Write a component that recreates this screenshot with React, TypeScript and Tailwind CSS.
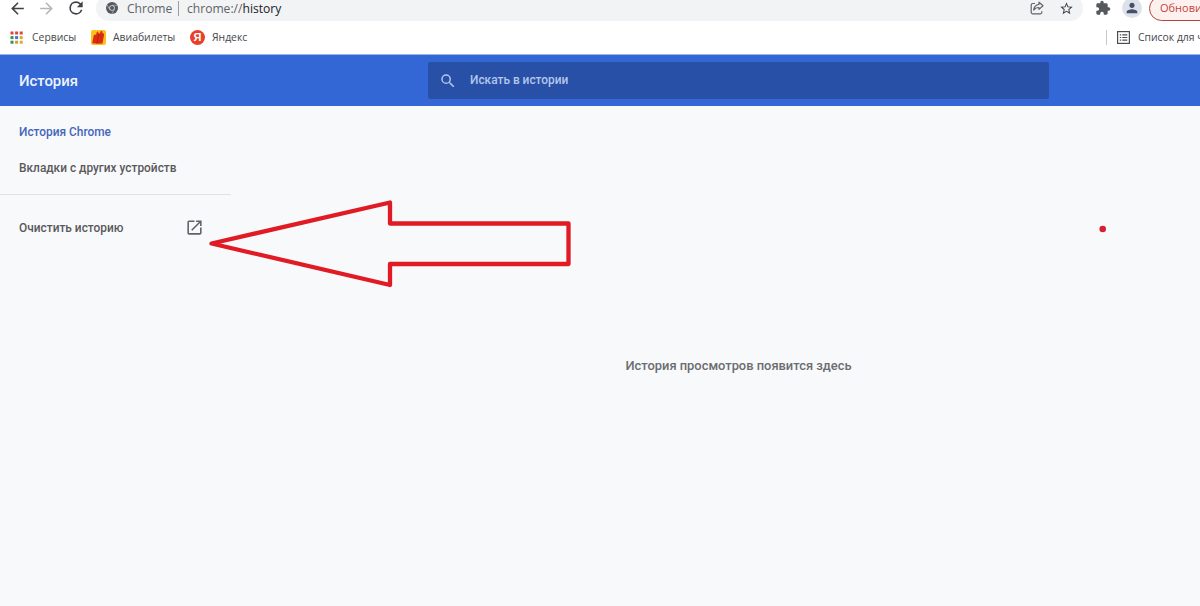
import type { ReactNode } from "react";

function Icon({
  d,
  size,
  className = "",
}: {
  d: string;
  size: number;
  className?: string;
}) {
  return (
    <svg
      width={size}
      height={size}
      viewBox="0 0 24 24"
      fill="currentColor"
      className={`shrink-0 ${className}`}
    >
      <path d={d} />
    </svg>
  );
}

const icons = {
  back: "M20 11H7.83l5.59-5.59L12 4l-8 8 8 8 1.41-1.41L7.83 13H20v-2z",
  forward: "M12 4l-1.41 1.41L16.17 11H4v2h12.17l-5.58 5.59L12 20l8-8z",
  reload:
    "M17.65 6.35A7.96 7.96 0 0 0 12 4a8 8 0 1 0 7.73 10h-2.08A6 6 0 1 1 12 6c1.66 0 3.14.69 4.22 1.78L13 11h7V4l-2.35 2.35z",
  star: "M22 9.24l-7.19-.62L12 2 9.19 8.63 2 9.24l5.46 4.73L5.82 21 12 17.27 18.18 21l-1.63-7.03L22 9.24zM12 15.4l-3.76 2.27 1-4.28-3.32-2.88 4.38-.38L12 6.1l1.71 4.04 4.38.38-3.32 2.88 1 4.28L12 15.4z",
  puzzle:
    "M20.5 11H19V7c0-1.1-.9-2-2-2h-4V3.5a2.5 2.5 0 0 0-5 0V5H4c-1.1 0-1.99.9-1.99 2v3.8H3.5a2.7 2.7 0 0 1 0 5.4H2V20c0 1.1.9 2 2 2h3.8v-1.5a2.7 2.7 0 0 1 5.4 0V22H17c1.1 0 2-.9 2-2v-4h1.5a2.5 2.5 0 0 0 0-5z",
  person:
    "M12 12c2.21 0 4-1.79 4-4s-1.79-4-4-4-4 1.79-4 4 1.79 4 4 4zm0 2c-2.67 0-8 1.34-8 4v2h16v-2c0-2.66-5.33-4-8-4z",
  search:
    "M15.5 14h-.79l-.28-.27A6.47 6.47 0 0 0 16 9.5 6.5 6.5 0 1 0 9.5 16c1.61 0 3.09-.59 4.23-1.57l.27.28v.79l5 4.99L20.49 19l-4.99-5zm-6 0a4.5 4.5 0 1 1 0-9 4.5 4.5 0 0 1 0 9z",
  open: "M19 19H5V5h7V3H5a2 2 0 0 0-2 2v14a2 2 0 0 0 2 2h14c1.1 0 2-.9 2-2v-7h-2v7zM14 3v2h3.59l-9.83 9.83 1.41 1.41L19 6.41V10h2V3h-7z",
};

function ChromeIcon() {
  return (
    <svg width="12" height="12" viewBox="0 0 24 24" className="shrink-0">
      <circle cx="12" cy="12" r="12" fill="#55595f" />
      <path
        d="M12 6.5h10.5M7.2 14.8L2 5.7M16.8 14.8L11.6 23.8"
        stroke="#c4c7cb"
        strokeWidth="1.3"
      />
      <circle cx="12" cy="12" r="5.6" fill="#d5d8dc" />
      <circle cx="12" cy="12" r="4" fill="#55595f" />
    </svg>
  );
}

function ShareIcon() {
  return (
    <svg
      width="14"
      height="14"
      viewBox="0 0 14 14"
      fill="none"
      stroke="#5f6368"
      strokeWidth="1.2"
      strokeLinejoin="round"
      className="shrink-0"
    >
      <path d="M5 2.5H2.8A1.6 1.6 0 0 0 1.2 4v7.2a1.6 1.6 0 0 0 1.6 1.6h7.4a1.6 1.6 0 0 0 1.6-1.6v-1" />
      <path d="M9 1.2l4 3.6-4 3.6V6.5c-2.6 0-4.2.8-5.3 2.6.3-3 2-5.4 5.3-5.8z" />
    </svg>
  );
}

const appColors = [
  "#d9483b",
  "#d9483b",
  "#d9483b",
  "#3c8f52",
  "#3f77d6",
  "#e0a92e",
  "#3c8f52",
  "#c9a02c",
  "#e0a92e",
];

function AppsIcon() {
  return (
    <svg width="13" height="13" viewBox="0 0 13 13" className="shrink-0">
      {appColors.map((color, i) => (
        <rect
          key={i}
          x={0.5 + (i % 3) * 4.6}
          y={0.5 + Math.floor(i / 3) * 4.6}
          width="3"
          height="3"
          fill={color}
        />
      ))}
    </svg>
  );
}

function TicketsIcon() {
  return (
    <svg width="15" height="15" viewBox="0 0 15 15" className="shrink-0">
      <rect width="15" height="15" rx="2" fill="#fbc21c" />
      <path d="M2.8 5l2.4-.6.5-2.2 1.2-.6.8 2 1.3-.3.8-2.2 1.4-.2.2 2.2 1.8.8-1.7 9.6-4 .3-6.3-.6z" fill="#dd2a12" />
      <path d="M7.8 4L6 13.5" stroke="#a51b0c" strokeWidth=".6" />
    </svg>
  );
}

function ReadingListIcon() {
  return (
    <svg
      width="13"
      height="13"
      viewBox="0 0 13 13"
      fill="none"
      stroke="#4a4d51"
      strokeWidth="1.2"
      className="shrink-0"
    >
      <rect x=".6" y=".6" width="11.8" height="11.8" />
      <path d="M2.8 3.8h1.4M5.3 3.8h5M2.8 6.5h1.4M5.3 6.5h5M2.8 9.2h1.4M5.3 9.2h5" />
    </svg>
  );
}

function Bookmark({
  icon,
  label,
  className,
}: {
  icon: ReactNode;
  label: string;
  className: string;
}) {
  return (
    <div className={`flex items-center whitespace-nowrap ${className}`}>
      {icon}
      <span>{label}</span>
    </div>
  );
}

function Toolbar() {
  return (
    <div className="h-[21px] overflow-hidden">
      <div className="-mt-[5px] flex h-[26px] items-center text-[#5f6368]">
        <Icon d={icons.back} size={19} className="ml-2 text-[#3f4246]" />
        <Icon d={icons.forward} size={19} className="ml-[10px] text-[#b4b6b9]" />
        <Icon d={icons.reload} size={20} className="ml-[10px] text-[#3f4246]" />
        <div className="ml-[10px] flex h-[26px] w-[987px] shrink-0 items-center rounded-full bg-[#f1f3f4] pl-[10px] pr-[9px] text-[12.1px]">
          <ChromeIcon />
          <span className="ml-[9px] w-[45px] pt-[2px]">Chrome</span>
          <div className="ml-[6px] h-[15px] w-px bg-[#9a9da1]" />
          <span className="ml-2 pt-[2px]">
            chrome://<span className="text-[#202124]">history</span>
          </span>
          <div className="ml-auto flex items-center gap-[15px]">
            <ShareIcon />
            <Icon d={icons.star} size={15} className="text-[#3f4246]" />
          </div>
        </div>
        <Icon d={icons.puzzle} size={16} className="ml-[12px] text-[#55585c]" />
        <div className="ml-[11px] flex size-[20px] shrink-0 items-center justify-center rounded-full bg-[#dde2ea]">
          <Icon d={icons.person} size={16} className="text-[#46506a]" />
        </div>
        <div className="ml-[7px] flex h-[25px] w-[90px] shrink-0 items-center rounded-full border border-[#b5453c] bg-[#fdf1f0] pl-[10px] text-[11px] text-[#c5443b]">
          Обновить
        </div>
      </div>
    </div>
  );
}

function BookmarksBar() {
  return (
    <div className="flex h-[33px] items-center overflow-hidden text-[10.4px] text-[#45484c]">
      <Bookmark icon={<AppsIcon />} label="Сервисы" className="ml-[10px] w-[81px] gap-[9px]" />
      <Bookmark icon={<TicketsIcon />} label="Авиабилеты" className="w-[99px] gap-[7px]" />
      <Bookmark
        icon={
          <span className="flex size-[15px] items-center justify-center rounded-full bg-[#e8402a] font-['Liberation_Sans',sans-serif] text-[11px] font-bold text-white">
            Я
          </span>
        }
        label="Яндекс"
        className="gap-[7px]"
      />
      <div className="ml-auto flex w-[94px] shrink-0 items-center whitespace-nowrap">
        <div className="h-[15px] w-px shrink-0 bg-[#c6c8cb]" />
        <Bookmark icon={<ReadingListIcon />} label="Список для чтения" className="ml-[10px] gap-2" />
      </div>
    </div>
  );
}

function Header() {
  return (
    <header className="flex h-[52px] items-center border-t border-[#9ab6ef] bg-[#3367d6] pl-[19px]">
      <h1 className="w-[409px] pt-[2px] text-[14.9px] font-medium text-[#eef3fd]">История</h1>
      <div className="flex h-[37px] w-[621px] items-center rounded-xs bg-[#2850a7] pl-[11px] text-[#b4c6ec]">
        <Icon d={icons.search} size={18} />
        <span className="ml-[13px] pt-px text-[11.9px] font-medium">Искать в истории</span>
      </div>
    </header>
  );
}

function Sidebar() {
  return (
    <nav className="w-[231px] pt-[7px] text-[11.9px] font-medium text-[#5a5a5c]">
      <div className="flex h-[37px] items-center pl-[19px] pt-[2px] text-[#4466bd]">
        История Chrome
      </div>
      <div className="flex h-[37px] items-center pl-[19px]">Вкладки с других устройств</div>
      <div className="mt-[7px] h-px bg-[#e0e2e5]" />
      <div className="mt-[14px] flex h-[37px] items-center justify-between pl-[19px] pr-[27px]">
        <span className="pt-[2px]">Очистить историю</span>
        <Icon d={icons.open} size={19} className="text-[#5f6368]" />
      </div>
    </nav>
  );
}

export default function App() {
  return (
    <div className="relative flex h-[606px] w-[1200px] flex-col overflow-hidden bg-white font-['Open_Sans',sans-serif]">
      <Toolbar />
      <BookmarksBar />
      <div className="flex flex-1 flex-col bg-[#f8f9fb] font-['Roboto',sans-serif]">
        <Header />
        <div className="flex flex-1">
          <Sidebar />
          <main className="flex flex-1 justify-center pt-[250px]">
            <p className="ml-[46px] text-[12.9px] font-medium text-[#6b6d70]">
              История просмотров появится здесь
            </p>
          </main>
        </div>
      </div>

      {/* Red marks drawn over the page */}
      <svg
        width="1200"
        height="606"
        viewBox="0 0 1200 606"
        className="pointer-events-none absolute inset-0"
      >
        <path
          d="M211.5 243.5L390 202.5V223.5H568.5V264H390V285z"
          fill="none"
          stroke="#e01b24"
          strokeWidth="4.3"
          strokeLinejoin="round"
        />
        <circle cx="1102.7" cy="229" r="3.3" fill="#d81f30" />
      </svg>
    </div>
  );
}
